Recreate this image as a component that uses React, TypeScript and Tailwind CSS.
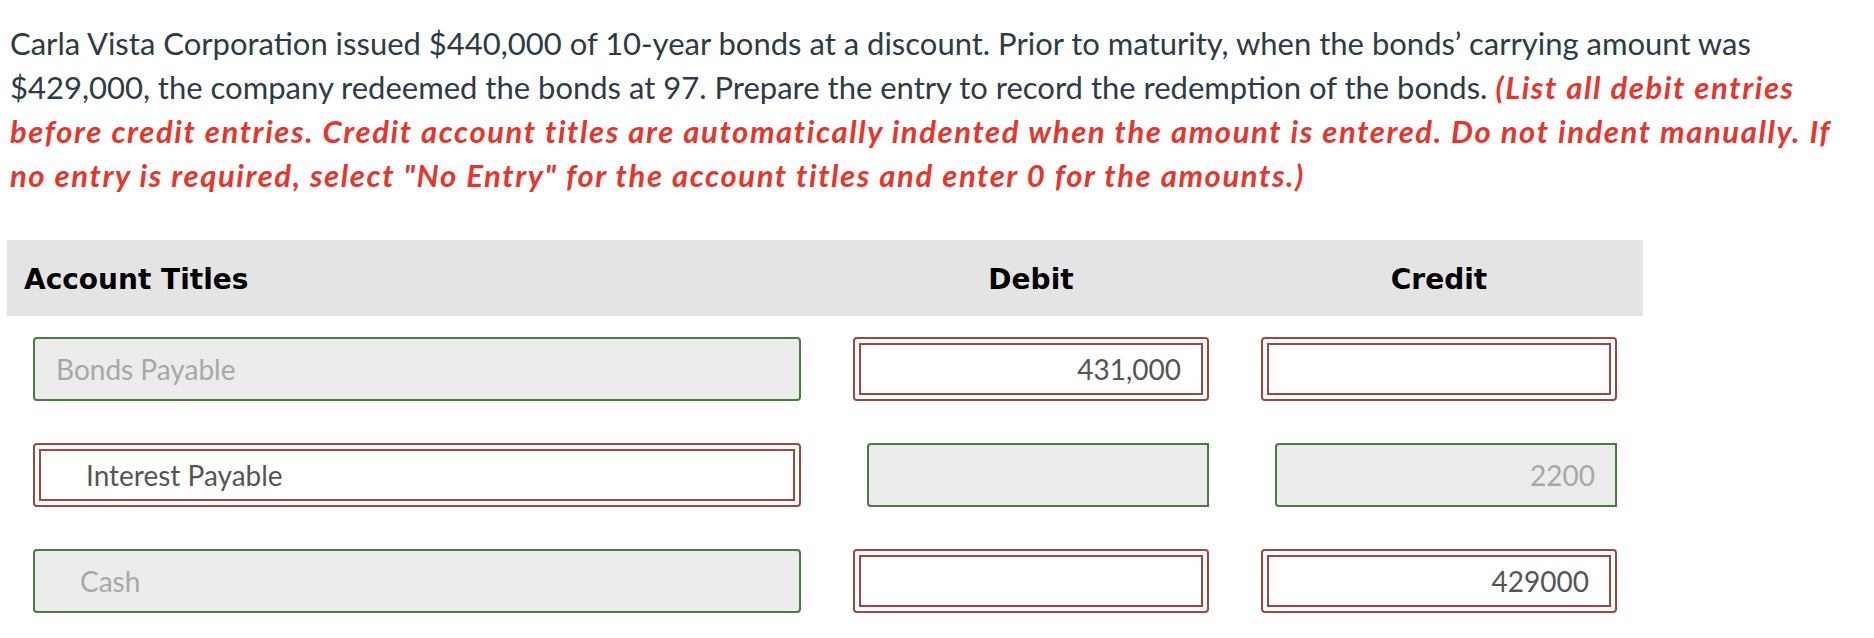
import React from "react";

const rows = [
  { title: "Bonds Payable", titleOk: true, indent: false, debit: "431,000", debitOk: false, credit: "", creditOk: false },
  { title: "Interest Payable", titleOk: false, indent: true, debit: "", debitOk: true, credit: "2200", creditOk: true },
  { title: "Cash", titleOk: true, indent: true, debit: "", debitOk: false, credit: "429000", creditOk: false },
];

const GreenBox = ({ value, right, indent, full }: { value: string; right?: boolean; indent?: boolean; full?: boolean }) => (
  <div
    className={
      full
        ? "h-[64px] flex items-center border-2 border-[#4b7a43] rounded-[4px] bg-[#ececec]"
        : "h-[64px] ml-[14px] flex items-center border-2 border-[#4b7a43] rounded-l-[4px] bg-[#ececec]"
    }
  >
    <input
      readOnly
      value={value}
      className={
        right
          ? "w-full bg-transparent outline-none text-right pr-[20px] text-[#a8a8a8]"
          : indent
          ? "w-full bg-transparent outline-none pl-[45px] text-[#a8a8a8]"
          : "w-full bg-transparent outline-none pl-[21px] text-[#a8a8a8]"
      }
    />
  </div>
);

const RedBox = ({ value, right, indent }: { value: string; right?: boolean; indent?: boolean }) => (
  <div className="h-[64px] border-2 border-[#a3453f] rounded-[4px] p-[4px] bg-white">
    <div className="h-full border-2 border-[#a3453f] flex items-center">
      <input
        readOnly
        value={value}
        className={
          right
            ? "w-full bg-transparent outline-none text-right pr-[20px] text-[#555555]"
            : indent
            ? "w-full bg-transparent outline-none pl-[45px] text-[#555555]"
            : "w-full bg-transparent outline-none pl-[13px] text-[#555555]"
        }
      />
    </div>
  </div>
);

export default function App() {
  return (
    <div className="w-[1874px] min-h-[638px] bg-white font-[Lato,sans-serif] text-[28px]">
      <p className="pt-[21px] pl-[10px] w-[1850px] text-[31px] leading-[44px] text-[#2d3b45]">
        Carla Vista Corporation issued $440,000 of 10-year bonds at a discount. Prior to maturity, when the bonds’ carrying
        amount was $429,000, the company redeemed the bonds at 97. Prepare the entry to record the redemption of the
        bonds.{" "}
        <span className="font-bold italic tracking-[1.6px] text-[#e8352b]">
          (List all debit entries before credit entries. Credit account titles are automatically indented when the amount
          is entered. Do not indent manually. If no entry is required, select "No Entry" for the account titles and enter
          0 for the amounts.)
        </span>
      </p>

      <div className="mt-[43px] ml-[7px] w-[1636px]">
        <div className="grid grid-cols-[820px_408px_408px] h-[76px] pt-[4px] items-center bg-[#e4e4e4] font-['DejaVu_Sans',sans-serif] font-bold text-black">
          <div className="pl-[17px]">Account Titles</div>
          <div className="text-center">Debit</div>
          <div className="text-center">Credit</div>
        </div>

        {rows.map((r) => (
          <div key={r.title} className="grid grid-cols-[820px_408px_408px] py-[21px]">
            <div className="px-[26px]">
              {r.titleOk ? <GreenBox value={r.title} indent={r.indent} full /> : <RedBox value={r.title} indent={r.indent} />}
            </div>
            <div className="px-[26px]">
              {r.debitOk ? <GreenBox value={r.debit} right /> : <RedBox value={r.debit} right />}
            </div>
            <div className="px-[26px]">
              {r.creditOk ? <GreenBox value={r.credit} right /> : <RedBox value={r.credit} right />}
            </div>
          </div>
        ))}
      </div>
    </div>
  );
}
